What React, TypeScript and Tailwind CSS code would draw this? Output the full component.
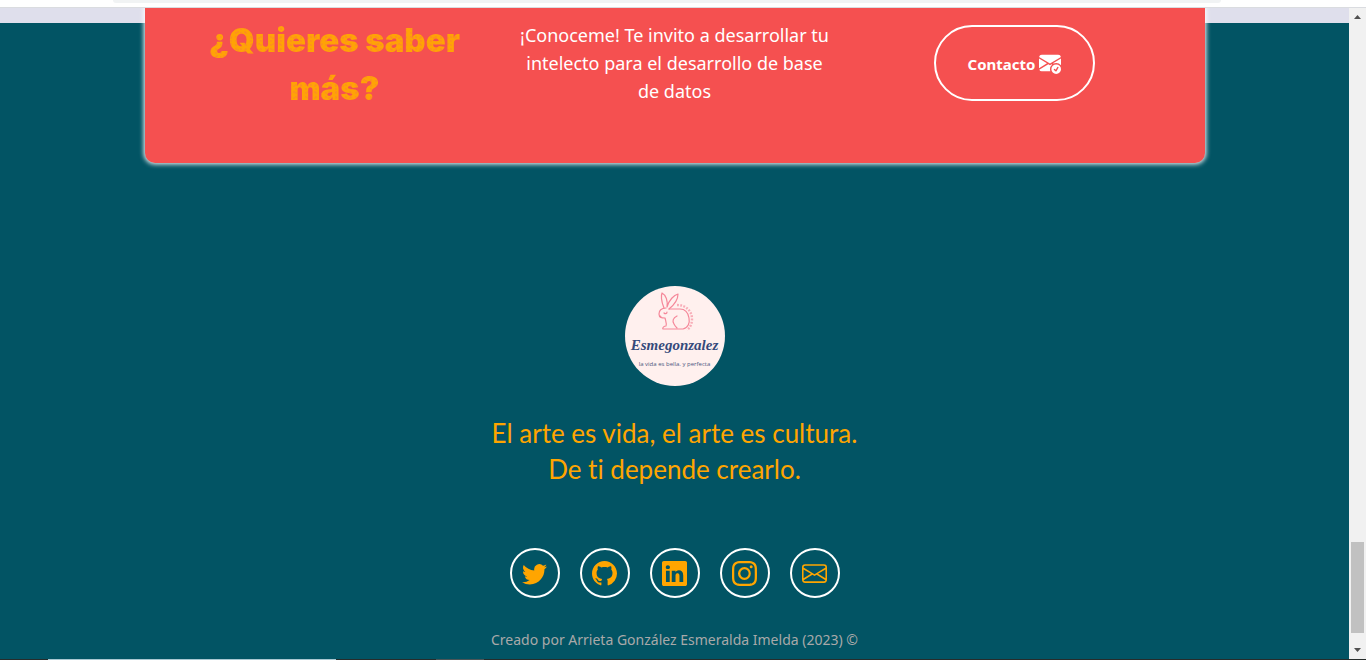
import type { ReactNode } from "react";
import {
  BsEnvelope,
  BsEnvelopeCheckFill,
  BsGithub,
  BsInstagram,
  BsLinkedin,
  BsTwitter,
} from "react-icons/bs";

const socials: { label: string; icon: ReactNode }[] = [
  { label: "Twitter", icon: <BsTwitter /> },
  { label: "GitHub", icon: <BsGithub /> },
  { label: "LinkedIn", icon: <BsLinkedin /> },
  { label: "Instagram", icon: <BsInstagram /> },
  { label: "Correo", icon: <BsEnvelope /> },
];

function BrowserEdge() {
  return (
    <div className="h-2 shrink-0 border-b border-[#dadce0] bg-white pr-8">
      <div className="mx-auto h-[3px] w-[83%] rounded-b-full bg-[#f1f3f4]" />
    </div>
  );
}

function ContactCard() {
  return (
    <section className="mx-auto -mt-[15px] grid w-[1060px] max-w-[90%] grid-cols-3 rounded-b-[10px] bg-[#f55050] px-5 pt-2 pb-[51px] text-center shadow-[0_0_5px_1px_#ffffff]">
      <h2 className="bg-[radial-gradient(circle_at_1px_1px,#fc8a25_0.5px,transparent_1px),radial-gradient(circle_at_3px_4px,#fc8a25_0.5px,transparent_1px)] bg-[#ffa305] bg-[length:5px_4px,7px_6px] bg-clip-text px-5 font-[Inter,sans-serif] text-[33px] leading-[48px] font-black text-transparent">
        ¿Quieres saber más?
      </h2>
      <p className="px-3 pt-[5px] font-['Noto_Sans',sans-serif] text-[18px] leading-[28px] text-white">
        ¡Conoceme! Te invito a desarrollar tu intelecto para el desarrollo de base de datos
      </p>
      <div className="pt-[9px]">
        <button
          type="button"
          className="inline-flex h-[76px] items-center gap-1 rounded-full border-2 border-white px-8 pt-[3px] font-['Noto_Sans',sans-serif] text-[15px] font-bold text-white"
        >
          Contacto
          <BsEnvelopeCheckFill className="mb-[3px] size-[22px]" />
        </button>
      </div>
    </section>
  );
}

function Logo() {
  return (
    <div className="flex size-[100px] flex-col items-center rounded-full bg-[#fff0ee] pt-1">
      <svg viewBox="0 0 40 42" className="ml-[3px] h-[42px] w-10 shrink-0" fill="none" stroke="#f58799" strokeWidth="1.2" strokeLinecap="round" strokeLinejoin="round" aria-hidden="true">
        <path d="M8 18C5 11 5 5 6 3C10 5 12 11 11 17M11 17C13 10 18 5 22 4C22 10 18 15 13 19" />
        <path d="M10 18C5 18 3 21 3 24C3 28 6 28 9 28C10 32 11 34 10 36C8 36 6 38 7 39H27C32 38 34 33 33 28C32 22 29 19 24 19H13" />
        <path d="M21 26C17 28 16 31 18 34C19 36 20 37 21 38M8 23C9 24 11 24 11 22M4 26L5 27" />
        <path d="M21 15C30 15 36 21 36 29C36 34 34 38 31 40" strokeWidth="2.4" strokeLinecap="butt" strokeDasharray="1.8 1.4" opacity=".65" />
      </svg>
      <span className="font-['Liberation_Serif',serif] text-[15px] leading-[26px] font-bold text-[#354a7b] italic">
        Esmegonzalez
      </span>
      <span className="font-['Open_Sans',sans-serif] text-[6px] leading-[12px] whitespace-nowrap text-[#4b5780]">
        la vida es bella. y perfecta
      </span>
    </div>
  );
}

function ScrollBar() {
  return (
    <div className="flex w-[17px] shrink-0 flex-col items-center bg-[#f1f1f1]" aria-hidden="true">
      <svg viewBox="0 0 17 17" className="size-[17px]">
        <path d="M5 11L8.500 7L12 11Z" fill="#505050" />
      </svg>
      <div className="flex-1" />
      <div className="h-[91px] w-[13px] bg-[#c1c1c1]" />
      <svg viewBox="0 0 17 17" className="mt-[9px] size-[17px]">
        <path d="M5 6L8.500 10L12 6Z" fill="#505050" />
      </svg>
    </div>
  );
}

export default function App() {
  return (
    <div className="flex h-screen flex-col overflow-hidden bg-[#025464]">
      <BrowserEdge />
      <div className="flex min-h-0 flex-1">
        <main className="min-w-0 flex-1 overflow-hidden">
          <div className="h-[15px] bg-[#dfdfec]" />
          <ContactCard />
          <footer className="flex flex-col items-center pt-[123px]">
            <Logo />
            <p className="mt-[29px] text-center font-[Lato,sans-serif] text-[26px] leading-[36px] text-[#ffa500] [font-variant-ligatures:none]">
              El arte es vida, el arte es cultura.
              <br />
              De ti depende crearlo.
            </p>
            <nav className="mt-[61px] flex gap-5" aria-label="Redes sociales">
              {socials.map((social) => (
                <a
                  key={social.label}
                  href="#"
                  aria-label={social.label}
                  className="flex size-[50px] items-center justify-center rounded-full border-2 border-white text-[25px] text-[#ffa500]"
                >
                  {social.icon}
                </a>
              ))}
            </nav>
            <p className="mt-[30px] font-['Noto_Sans',sans-serif] text-[14px] leading-[24px] text-[#a9a9a9]">
              Creado por Arrieta González Esmeralda Imelda (2023) ©
            </p>
          </footer>
        </main>
        <ScrollBar />
      </div>
      <div className="flex h-px shrink-0 bg-[#272c2b]">
        <div className="ml-12 w-72 bg-[#a9c8d2]" />
        <div className="ml-[100px] w-12 bg-[#4b5557]" />
      </div>
    </div>
  );
}
